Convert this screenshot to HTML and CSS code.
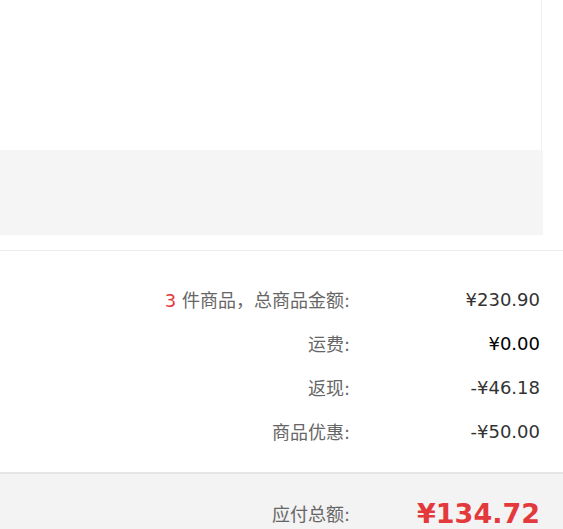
FILE: index.html
```html
<!DOCTYPE html>
<html lang="zh-CN">
<head>
    <meta charset="UTF-8">
    <meta name="viewport" content="width=device-width, initial-scale=1.0">
    <title>订单结算</title>
    <link rel="stylesheet" href="styles.css">
</head>
<body>
    <div id="order-panel">
        <div class="order-body"></div>
        <div class="order-remark"></div>
    </div>

    <div id="summary">
        <div class="summary-row">
            <span class="summary-label"><em class="count">3</em> 件商品，总商品金额:</span>
            <span class="summary-value">¥230.90</span>
        </div>
        <div class="summary-row">
            <span class="summary-label">运费:</span>
            <span class="summary-value freight">¥0.00</span>
        </div>
        <div class="summary-row">
            <span class="summary-label">返现:</span>
            <span class="summary-value">-¥46.18</span>
        </div>
        <div class="summary-row">
            <span class="summary-label">商品优惠:</span>
            <span class="summary-value">-¥50.00</span>
        </div>
    </div>

    <div id="total-bar">
        <div class="summary-row total-row">
            <span class="summary-label">应付总额:</span>
            <span class="summary-value total-price">¥134.72</span>
        </div>
    </div>
</body>
</html>
```

FILE: styles.css
```css
body {
    margin: 0;
    font-family: "DejaVu Sans", "Noto Sans CJK SC", sans-serif;
    font-size: 18px;
    color: #333;
    background-color: #fff;
    overflow: hidden;
}

#order-panel {
    width: 543px;
}

.order-body {
    height: 150px;
    width: 541px;
    border-right: 1px solid #f0f0f0;
    background-color: #fff;
}

.order-remark {
    height: 85px;
    background-color: #f5f5f5;
}

#summary {
    margin-top: 15px;
    border-top: 1px solid #ececec;
    padding: 26px 0 19px;
}

.summary-row {
    display: flex;
    justify-content: flex-end;
    align-items: center;
    height: 44px;
    padding-right: 23px;
}

.summary-label {
    color: #666;
    text-align: right;
}

.summary-label .count {
    font-style: normal;
    color: #e4393c;
}

.summary-value {
    width: 190px;
    text-align: right;
    color: #333;
}

.summary-value.freight {
    color: #000;
}

#total-bar {
    border-top: 2px solid #e6e6e6;
    background-color: #f3f3f3;
    padding-top: 25px;
    height: 31px;
}

.total-row {
    height: 28px;
}

.total-price {
    font-size: 27px;
    line-height: 1;
    font-weight: bold;
    color: #e4393c;
}
```
